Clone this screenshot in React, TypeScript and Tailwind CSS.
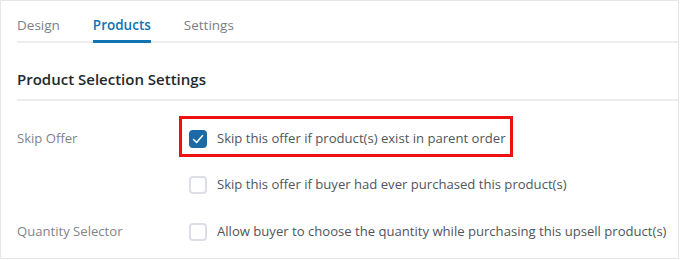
import React from "react";

function Check({ checked }: { checked?: boolean }) {
  if (checked) {
    return (
      <span className="flex h-[18px] w-[18px] shrink-0 items-center justify-center rounded-[4px] bg-[#1b6aa5]">
        <svg width="14" height="14" viewBox="0 0 14 14" fill="none">
          <path d="M2.5 7.5 L5.6 10.4 L11.6 3.6" stroke="white" strokeWidth="1.5" strokeLinecap="round" strokeLinejoin="round" />
        </svg>
      </span>
    );
  }
  return <span className="block h-[18px] w-[18px] shrink-0 rounded-[4px] border-2 border-[#dedee9] bg-white" />;
}

export default function App() {
  return (
    <div className="h-[260px] w-[680px] overflow-hidden bg-white" style={{ fontFamily: '"Open Sans", "Noto Sans", sans-serif' }}>
      <div className="h-[259px] w-[679px] border border-[#e6e6e6] pl-[16px]">
        <div className="flex h-[42px] items-end gap-[33px] border-b-2 border-[#ededf0] text-[13.5px] text-[#7c7f86]">
          <div className="pb-[6px]">Design</div>
          <div className="-mb-[2px] border-b-[3px] border-[#0f74b3] pb-[5px] font-semibold text-[#0f74b3]">Products</div>
          <div className="pb-[6px]">Settings</div>
        </div>
        <div className="h-[58px] border-b-2 border-[#ededf0] pt-[26px] text-[15px] font-semibold leading-[20px] text-[#23282d]">
          Product Selection Settings
        </div>
        <div className="relative whitespace-nowrap text-[13.1px]">
          <div className="flex h-[74px] items-center pt-[2px]">
            <div className="w-[172px] text-[#80848b]">Skip Offer</div>
            <div className="flex items-center gap-[10px] text-[#50555c]">
              <Check checked />
              <span>Skip this offer if product(s) exist in parent order</span>
            </div>
          </div>
          <div className="flex h-[20px] items-center">
            <div className="w-[172px]" />
            <div className="flex items-center gap-[10px] text-[#50555c]">
              <Check />
              <span>Skip this offer if buyer had ever purchased this product(s)</span>
            </div>
          </div>
          <div className="flex h-[74px] items-center">
            <div className="w-[172px] text-[#80848b]">Quantity Selector</div>
            <div className="flex items-center gap-[10px] text-[#50555c]">
              <Check />
              <span>Allow buyer to choose the quantity while purchasing this upsell product(s)</span>
            </div>
          </div>
          <div className="pointer-events-none absolute left-[162px] top-[15px] h-[41px] w-[334px] border-[3px] border-[#ee1111]" />
        </div>
      </div>
    </div>
  );
}
